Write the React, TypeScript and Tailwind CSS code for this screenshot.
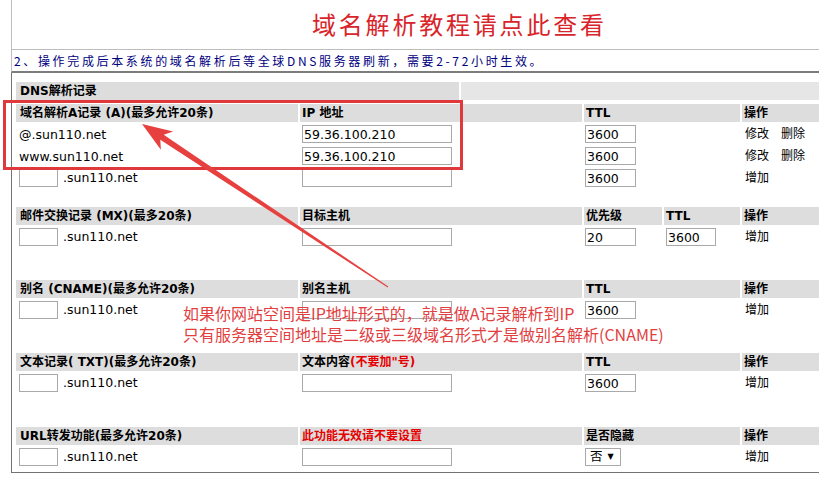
import React from 'react';

const grid = 'grid grid-cols-[282px_282px_78px_76px_1fr] gap-[2px]';
const hd = 'h-[18px] bg-[#dddddd] flex items-center font-bold text-[12px] pl-[2px] whitespace-nowrap overflow-hidden';
const td = 'h-[20px] flex items-center whitespace-nowrap';

function Box({ w, value = '' }: { w: string; value?: string }) {
  return (
    <input
      readOnly
      value={value}
      className={`${w} h-[18px] border border-[#a9a9a9] bg-white px-[1px] text-[12.5px] leading-[16px] text-black outline-none`}
    />
  );
}

function Host({ name }: { name?: string }) {
  if (name) return <div className={`${td} pl-[3px] pt-[2px] text-[12.5px]`}>{name}</div>;
  return (
    <div className={`${td} pl-[3px] gap-[5px] text-[12.5px]`}>
      <Box w="w-[39px]" />
      <span>.sun110.net</span>
    </div>
  );
}

function Ops({ edit }: { edit?: boolean }) {
  return (
    <div className={`${td} pl-[3px] text-[12px] gap-[12px]`}>
      {edit ? (
        <>
          <span>修改</span>
          <span>删除</span>
        </>
      ) : (
        <span>增加</span>
      )}
    </div>
  );
}

export default function App() {
  return (
    <div className="relative w-[819px] h-[482px] overflow-hidden bg-white text-black font-[family-name:'DejaVu_Sans','Noto_Sans_CJK_SC',sans-serif]">
      <div className="ml-[11px]">
        {/* Title */}
        <div className="h-[50px] border-l border-b border-[#bdbdbd] pl-[300px] pt-[9px]">
          <span className="text-[24px] leading-[30px] tracking-[2.8px] text-[#d8242a] font-[family-name:'Noto_Sans_CJK_SC',sans-serif]">
            域名解析教程请点此查看
          </span>
        </div>

        {/* Notice */}
        <div className="h-[23px] border-l border-l-[#bdbdbd] border-b-2 border-b-[#7c7c7c] pl-[2px] flex items-center">
          <span className="text-[12px] tracking-[2.65px] text-[#000080] whitespace-nowrap font-[family-name:'Noto_Sans_CJK_SC',sans-serif]">
            2、操作完成后本系统的域名解析后等全球DNS服务器刷新，需要2-72小时生效。
          </span>
        </div>

        {/* Records box */}
        <div className="border-l border-b border-[#737373] pl-[4px] pt-[9px] pb-[5px]">
          <div className="grid grid-cols-[443px_1fr] gap-[2px]">
            <div className={`${hd} bg-[#d2d2d2] pl-[4px]`}>DNS解析记录</div>
            <div className={`${hd} bg-[#e6e6e6]`} />
          </div>

          {/* A */}
          <div className={`${grid} mt-[4px]`}>
            <div className={`${hd} pl-[4px]`}>域名解析A记录 (A)(最多允许20条)</div>
            <div className={hd}>IP 地址</div>
            <div className={`${hd} col-span-2`}>TTL</div>
            <div className={hd}>操作</div>

            <Host name="@.sun110.net" />
            <div className={`${td} pl-[2px]`}><Box w="w-[150px]" value="59.36.100.210" /></div>
            <div className={`${td} col-span-2 pl-[1px]`}><Box w="w-[51px]" value="3600" /></div>
            <Ops edit />

            <Host name="www.sun110.net" />
            <div className={`${td} pl-[2px]`}><Box w="w-[150px]" value="59.36.100.210" /></div>
            <div className={`${td} col-span-2 pl-[1px]`}><Box w="w-[51px]" value="3600" /></div>
            <Ops edit />

            <Host />
            <div className={`${td} pl-[2px]`}><Box w="w-[150px]" /></div>
            <div className={`${td} col-span-2 pl-[1px]`}><Box w="w-[51px]" value="3600" /></div>
            <Ops />
          </div>

          {/* MX */}
          <div className={`${grid} mt-[19px]`}>
            <div className={`${hd} pl-[4px]`}>邮件交换记录 (MX)(最多20条)</div>
            <div className={hd}>目标主机</div>
            <div className={hd}>优先级</div>
            <div className={hd}>TTL</div>
            <div className={hd}>操作</div>

            <Host />
            <div className={`${td} pl-[2px]`}><Box w="w-[150px]" /></div>
            <div className={`${td} pl-[1px]`}><Box w="w-[51px]" value="20" /></div>
            <div className={`${td} pl-[2px]`}><Box w="w-[50px]" value="3600" /></div>
            <Ops />
          </div>

          {/* CNAME */}
          <div className={`${grid} mt-[33px]`}>
            <div className={`${hd} pl-[4px]`}>别名 (CNAME)(最多允许20条)</div>
            <div className={hd}>别名主机</div>
            <div className={`${hd} col-span-2`}>TTL</div>
            <div className={hd}>操作</div>

            <Host />
            <div className={`${td} pl-[2px]`}><Box w="w-[150px]" /></div>
            <div className={`${td} col-span-2 pl-[1px]`}><Box w="w-[51px]" value="3600" /></div>
            <Ops />
          </div>

          {/* TXT */}
          <div className={`${grid} mt-[33px]`}>
            <div className={`${hd} pl-[4px]`}>文本记录( TXT)(最多允许20条)</div>
            <div className={hd}>
              文本内容<span className="text-[#e60000]">(不要加"号)</span>
            </div>
            <div className={`${hd} col-span-2`}>TTL</div>
            <div className={hd}>操作</div>

            <Host />
            <div className={`${td} pl-[2px]`}><Box w="w-[150px]" /></div>
            <div className={`${td} col-span-2 pl-[1px]`}><Box w="w-[51px]" value="3600" /></div>
            <Ops />
          </div>

          {/* URL */}
          <div className={`${grid} mt-[34px]`}>
            <div className={`${hd} pl-[4px]`}>URL转发功能(最多允许20条)</div>
            <div className={`${hd} text-[#e60000]`}>此功能无效请不要设置</div>
            <div className={`${hd} col-span-2`}>是否隐藏</div>
            <div className={hd}>操作</div>

            <Host />
            <div className={`${td} pl-[2px]`}><Box w="w-[150px]" /></div>
            <div className={`${td} col-span-2 pl-[1px]`}>
              <div className="h-[18px] w-[36px] border border-[#a9a9a9] flex items-center pl-[4px] gap-[5px]">
                <span className="text-[12.5px] leading-none">否</span>
                <span className="text-[8px] leading-none">▼</span>
              </div>
            </div>
            <Ops />
          </div>
        </div>
      </div>

      {/* Annotation: highlight box */}
      <div className="absolute left-[3px] top-[100px] w-[460px] h-[70px] border-[3px] border-[#e0393b]" />

      {/* Annotation: arrow */}
      <svg className="absolute left-0 top-0 pointer-events-none" width="819" height="482" viewBox="0 0 819 482">
        <polygon
          points="142,124 173.1,131.4 163.7,134.8 388.3,286.5 387.7,287.5 160.3,139.8 160.9,149.7"
          fill="#e6403f"
        />
      </svg>

      {/* Annotation: note */}
      <div className="absolute left-[183px] top-[303px] text-[16px] leading-[21px] text-[#e2403f] whitespace-nowrap font-[family-name:'Noto_Sans_CJK_SC',sans-serif]">
        <div>如果你网站空间是IP地址形式的，就是做A记录解析到IP</div>
        <div>只有服务器空间地址是二级或三级域名形式才是做别名解析(CNAME)</div>
      </div>
    </div>
  );
}
